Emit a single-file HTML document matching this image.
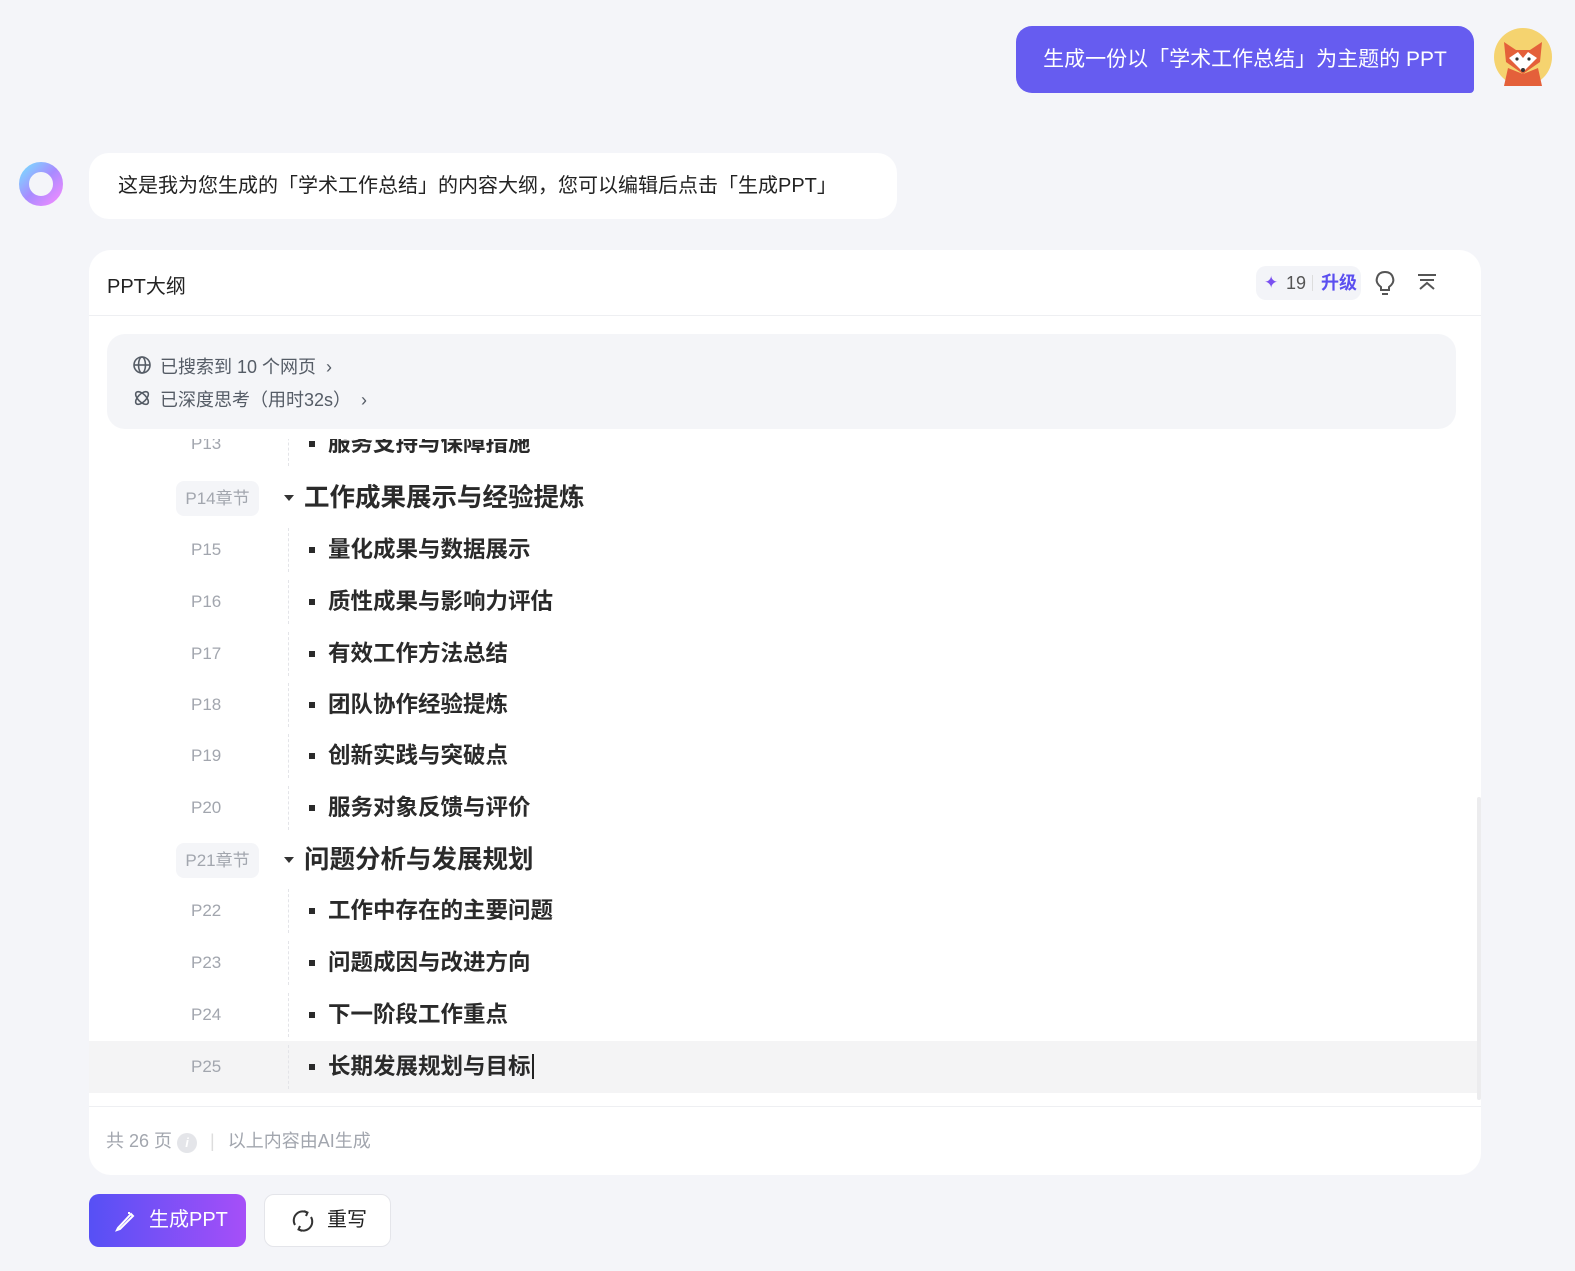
<!DOCTYPE html>
<html><head><meta charset="utf-8"><style>
*{margin:0;padding:0;box-sizing:border-box}
body{width:1575px;height:1271px;background:#f4f5f9;font-family:"Liberation Sans","Noto Sans CJK SC",sans-serif;position:relative;overflow:hidden;color:#222}
.abs{position:absolute}
.ubub{left:1016px;top:26px;width:458px;height:67px;background:#665cf0;border-radius:16px 16px 4px 16px;color:#fff;font-size:21px;line-height:67px;text-align:center}
.ai{left:89px;top:153px;width:808px;height:66px;background:#fff;border-radius:20px;font-size:20px;line-height:66px;padding-left:29px;color:#222}
.card{left:89px;top:250px;width:1392px;height:925px;background:#fff;border-radius:22px;overflow:hidden}
.row{position:absolute;left:0;width:1388px;height:52px}
.pn{position:absolute;left:102px;top:0;line-height:52px;font-size:17px;color:#a2a6ae}
.dl{position:absolute;left:199px;top:4px;height:44px;border-left:1px dashed #e3e4e8}
.it{position:absolute;left:239px;line-height:52px;font-size:22.5px;font-weight:bold;color:#2a2a2a}
.it:before{content:"";position:absolute;left:-19px;top:23px;width:6px;height:6px;background:#2a2a2a}
.ch{position:absolute;left:87px;top:9px;width:83px;height:35px;background:#f4f5f8;border-radius:8px;font-size:17px;color:#a2a6ae;line-height:35px;text-align:center}
.ct{position:absolute;left:215px;line-height:52px;font-size:25.5px;font-weight:bold;color:#2a2a2a}
.tri{position:absolute;left:195px;top:23px;width:0;height:0;border-left:5px solid transparent;border-right:5px solid transparent;border-top:6px solid #333}
</style></head><body>
<div class="abs ubub">生成一份以「学术工作总结」为主题的 PPT</div>
<svg class="abs" style="left:1494px;top:28px" width="58" height="58" viewBox="0 0 58 58"><circle cx="29" cy="29" r="29" fill="#f5d36f"/><path d="M10 58 L14 40 L29 46 L44 40 L48 58Z" fill="#e4603a"/><path d="M10 14 L22 22 L36 22 L48 14 L46 34 L29 46 L12 34Z" fill="#e4603a"/><path d="M15 30 L24 24 L29 30 L34 24 L43 30 L29 44Z" fill="#fff"/><circle cx="23" cy="31" r="1.6" fill="#333"/><circle cx="35" cy="31" r="1.6" fill="#333"/><circle cx="29" cy="42" r="2" fill="#333"/></svg>
<svg class="abs" style="left:16px;top:159px" width="50" height="50" viewBox="0 0 50 50"><defs><linearGradient id="g" x1="0" y1="0" x2="1" y2="1"><stop offset="0" stop-color="#7fd3ff"/><stop offset=".5" stop-color="#a88bff"/><stop offset="1" stop-color="#e98bff"/></linearGradient></defs><circle cx="25" cy="25" r="17" fill="none" stroke="url(#g)" stroke-width="10"/><circle cx="25" cy="25" r="8" fill="#f4f5f9"/></svg>
<div class="abs ai">这是我为您生成的「学术工作总结」的内容大纲，您可以编辑后点击「生成PPT」</div>
<div class="abs card">
 <div class="abs" style="left:18px;top:20px;font-size:20px;color:#222">PPT大纲</div>
 <div class="abs" style="left:1167px;top:16px;width:105px;height:34px;background:#f3f4f8;border-radius:10px;font-size:18px;line-height:34px">
  <span class="abs" style="left:8px;color:#7a50f0;font-size:17px">✦</span><span class="abs" style="left:30px;color:#555">19</span><span class="abs" style="left:56px;top:9px;height:16px;border-left:1px solid #ddd"></span><span class="abs" style="left:65px;color:#5b4ff0;font-weight:bold">升级</span></div>
 <svg class="abs" style="left:1284px;top:20px" width="24" height="26" viewBox="0 0 24 26" fill="none" stroke="#555" stroke-width="2"><path d="M8 17 C4 14 3 11 4 8 C5 4 8 2 12 2 C16 2 19 4 20 8 C21 11 20 14 16 17 L16 20 L8 20Z"/><path d="M9 24 L15 24"/></svg>
 <svg class="abs" style="left:1327px;top:22px" width="22" height="22" viewBox="0 0 22 22" fill="none" stroke="#555" stroke-width="2"><path d="M2 3 H20 M4 8 H18 M4 17 L11 11 L18 17"/></svg>
 <div class="abs" style="left:0;top:65px;width:1392px;border-top:1px solid #eeeff2"></div>
 <div class="abs" style="left:18px;top:84px;width:1349px;height:95px;background:#f4f5f8;border-radius:18px;font-size:18px;color:#555c66">
  <svg class="abs" style="left:26px;top:22px" width="18" height="18" viewBox="0 0 18 18" fill="none" stroke="#555c66" stroke-width="1.6"><circle cx="9" cy="9" r="8"/><ellipse cx="9" cy="9" rx="3.5" ry="8"/><path d="M1 9 H17"/></svg>
  <div class="abs" style="left:53px;top:19px">已搜索到 10 个网页 &nbsp;›</div>
  <svg class="abs" style="left:26px;top:55px" width="18" height="18" viewBox="0 0 18 18" fill="none" stroke="#555c66" stroke-width="1.6"><ellipse cx="9" cy="9" rx="8" ry="4" transform="rotate(45 9 9)"/><ellipse cx="9" cy="9" rx="8" ry="4" transform="rotate(-45 9 9)"/></svg>
  <div class="abs" style="left:53px;top:52px">已深度思考（用时32s） &nbsp;›</div>
 </div>
 <div class="abs" style="left:0;top:189px;width:1392px;height:661px;overflow:hidden">
  <div class="row" style="top:-21px"><span class="pn">P13</span><span class="dl"></span><span class="it">服务支持与保障措施</span></div>
  <div class="row" style="top:33px"><span class="ch">P14章节</span><span class="tri"></span><span class="ct">工作成果展示与经验提炼</span></div>
  <div class="row" style="top:85px"><span class="pn">P15</span><span class="dl"></span><span class="it">量化成果与数据展示</span></div>
  <div class="row" style="top:137px"><span class="pn">P16</span><span class="dl"></span><span class="it">质性成果与影响力评估</span></div>
  <div class="row" style="top:189px"><span class="pn">P17</span><span class="dl"></span><span class="it">有效工作方法总结</span></div>
  <div class="row" style="top:240px"><span class="pn">P18</span><span class="dl"></span><span class="it">团队协作经验提炼</span></div>
  <div class="row" style="top:291px"><span class="pn">P19</span><span class="dl"></span><span class="it">创新实践与突破点</span></div>
  <div class="row" style="top:343px"><span class="pn">P20</span><span class="dl"></span><span class="it">服务对象反馈与评价</span></div>
  <div class="row" style="top:395px"><span class="ch">P21章节</span><span class="tri"></span><span class="ct">问题分析与发展规划</span></div>
  <div class="row" style="top:446px"><span class="pn">P22</span><span class="dl"></span><span class="it">工作中存在的主要问题</span></div>
  <div class="row" style="top:498px"><span class="pn">P23</span><span class="dl"></span><span class="it">问题成因与改进方向</span></div>
  <div class="row" style="top:550px"><span class="pn">P24</span><span class="dl"></span><span class="it">下一阶段工作重点</span></div>
  <div class="row" style="top:602px;background:#f4f4f5"><span class="pn">P25</span><span class="dl"></span><span class="it">长期发展规划与目标<span style="border-right:2px solid #222;margin-left:1px"></span></span></div>
  <div class="abs" style="left:1388px;top:358px;width:4px;height:303px;background:#ececee;border-radius:2px"></div>
 </div>
 <div class="abs" style="left:0;top:856px;width:1392px;border-top:1px solid #eeeff2"></div>
 <div class="abs" style="left:17px;top:877px;font-size:18px;color:#a2a6ae">共 26 页 <span style="display:inline-block;width:20px;height:20px;border-radius:50%;background:#e4e5e9;color:#fff;font-size:13px;text-align:center;line-height:20px;font-style:italic;font-weight:bold;vertical-align:0px">i</span> <span style="color:#ddd;margin:0 8px">|</span> 以上内容由AI生成</div>
</div>
<div class="abs" style="left:89px;top:1194px;width:157px;height:53px;border-radius:10px;background:linear-gradient(90deg,#5650f5,#a64ff8);color:#fff;font-size:20px;line-height:53px;padding-left:60px">生成PPT</div>
<svg class="abs" style="left:114px;top:1208px" width="24" height="24" viewBox="0 0 24 24" fill="none" stroke="#fff" stroke-width="2"><path d="M4 20 L3 22 L6 21 L19 8 L17 6Z"/><path d="M15 4 L15 6 M14 5 H16"/></svg>
<div class="abs" style="left:264px;top:1194px;width:127px;height:53px;border-radius:10px;background:#fff;border:1px solid #e4e5ea;font-size:20px;line-height:51px;padding-left:62px;color:#222">重写</div>
<svg class="abs" style="left:290px;top:1208px" width="26" height="26" viewBox="0 0 26 26" fill="none" stroke="#333" stroke-width="2"><path d="M5 17 A9 9 0 0 1 17 4.5"/><path d="M21 9 A9 9 0 0 1 9 21.5"/><path d="M14 3 L17.5 4.5 L16 8"/><path d="M12 23 L8.5 21.5 L10 18"/></svg>
</body></html>
